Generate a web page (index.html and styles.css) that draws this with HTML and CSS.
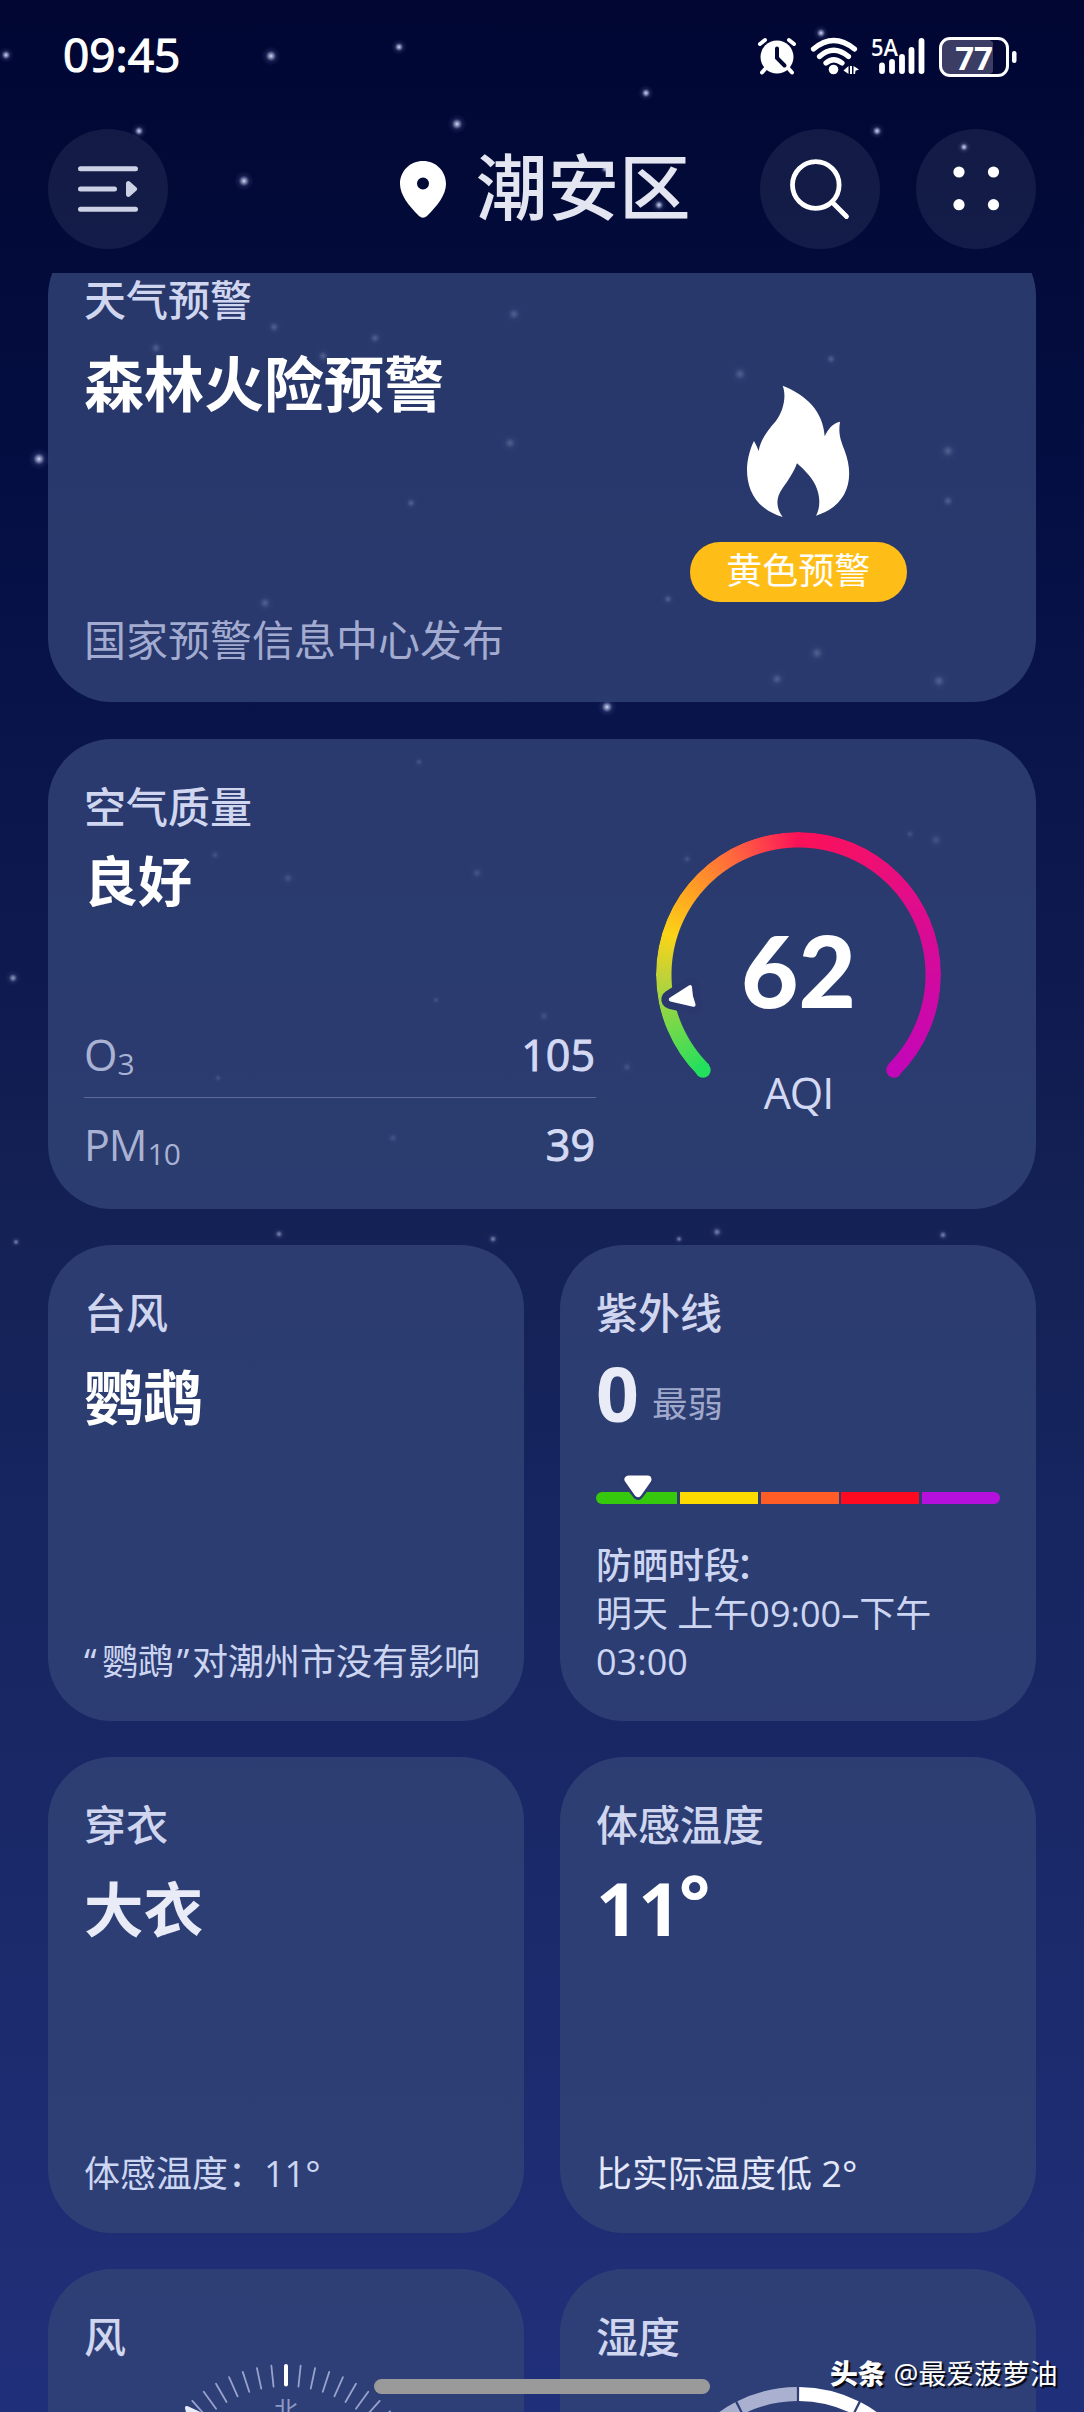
FILE: index.html
```html
<!DOCTYPE html>
<html lang="zh-CN">
<head>
<meta charset="utf-8">
<title>天气</title>
<link rel="stylesheet" href="styles.css">
</head>
<body>
<div class="screen">
  <svg class="stars" id="stars" viewBox="0 0 1084 2412" aria-hidden="true">
    <defs>
      <radialGradient id="glow">
        <stop offset="0" stop-color="#e4e8ff" stop-opacity=".95"/>
        <stop offset=".3" stop-color="#a9b0dc" stop-opacity=".6"/>
        <stop offset=".55" stop-color="#6670ac" stop-opacity=".18"/>
        <stop offset="1" stop-color="#4a5494" stop-opacity="0"/>
      </radialGradient>
    </defs>
  </svg>

  <div class="status">
    <span class="clock">09:45</span>
    <svg class="status-icons" width="262" height="60" viewBox="757 19 262 60" aria-hidden="true">
      <g fill="#fff" stroke="#fff" stroke-linecap="round">
        <circle cx="777" cy="57" r="16.500" stroke="none"/>
        <path d="M760 44l5-4M789 40l5 4M766 68l-4 4.500M788 68l4 4.500" fill="none" stroke-width="4"/>
        <path d="M777 48.500V58l7.500 7.500" fill="none" stroke="#020733" stroke-width="4"/>
      </g>
      <g fill="none" stroke="#fff" stroke-width="5.200" stroke-linecap="round">
        <path d="M813.500 49Q833.500 32 854.500 49M819.500 56.500Q833.500 44 848.500 56.500M826 63Q833.500 56.500 842 63"/>
        <circle cx="833.500" cy="69.500" r="4.800" fill="#fff" stroke="none"/>
      </g>
      <path d="M843.500 70.500l5-4.500v8zM850 66h2v8h-2zM853.500 66l5.500 3.500-3.500 1.200-.5 3.300h-1.500z" fill="#fff"/>
      <text class="net" x="871" y="56" textLength="27" lengthAdjust="spacingAndGlyphs">5A</text>
      <g stroke="#fff" stroke-width="5.800" stroke-linecap="round">
        <path d="M882 65.500V71M892 62V71M902 57V71M911.500 50V71M921.500 41V71"/>
      </g>
      <rect x="941" y="39" width="54" height="36" rx="9" fill="#3b3d64"/>
      <rect x="993" y="39" width="13" height="36" fill="#020733"/>
      <rect x="940.500" y="38.500" width="67" height="37" rx="9.500" fill="none" stroke="#fff" stroke-width="3"/>
      <rect x="1012" y="51" width="4.500" height="12" rx="2.200" fill="#fff"/>
      <text class="level" x="974" y="69.500" text-anchor="middle">77</text>
    </svg>
  </div>

  <header class="header">
    <button class="round" aria-label="城市列表">
      <svg width="120" height="120" viewBox="0 0 120 120"><g stroke="#cdd1e5" stroke-width="5" stroke-linecap="round"><path d="M32.500 39.800H87.500M32.500 60H66.500M32.500 80.200H87.500"/></g><path d="M78 54.500c0-2.500 2.500-3.200 4-1.800l6.500 5.800q1.600 1.500 0 3L82 67.300c-1.500 1.400-4 .7-4-1.800z" fill="#cdd1e5"/></svg>
    </button>
    <h1 class="city">
      <svg width="46" height="57" viewBox="0 0 46 57"><path fill="#fff" fill-rule="evenodd" d="M23 0C36 0 46 10 46 23c0 11-9 22-19 32q-4 3.500-8 0C9 45 0 34 0 23 0 10 10 0 23 0zm0 16.500a6 6 0 1 0 0 12 6 6 0 0 0 0-12z"/></svg>
      <span>潮安区</span>
    </h1>
    <button class="round" aria-label="搜索">
      <svg width="120" height="120" viewBox="0 0 120 120" fill="none" stroke="#fff" stroke-width="4.800" stroke-linecap="round"><circle cx="55.800" cy="56" r="23.300"/><path d="M72.500 73.500L86.500 87.500"/></svg>
    </button>
    <button class="round" aria-label="更多">
      <svg width="120" height="120" viewBox="0 0 120 120" fill="#fff"><circle cx="43" cy="43" r="5.600"/><circle cx="77.500" cy="43" r="5.600"/><circle cx="43" cy="75.700" r="5.600"/><circle cx="77.500" cy="75.700" r="5.600"/></svg>
    </button>
  </header>

  <main class="cards">
    <section class="card wide alert">
      <div class="col">
        <h2 class="title">天气预警</h2>
        <p class="headline">森林火险预警</p>
        <p class="source">国家预警信息中心发布</p>
      </div>
      <div class="alert-side">
        <svg width="105" height="133" viewBox="320 136 315 399"><path fill="#fff" d="M430 138C500 165 552 215 556 290C565 270 580 250 602 246C596 285 605 302 615 330C650 420 622 500 530 528C546 500 545 450 510 408Q490 385 473 371C465 395 445 425 430 445C408 475 410 505 430 532C350 508 323 450 323 390C323 360 333 325 344 304C350 315 355 325 358 334C362 305 385 270 408 246C435 212 441 165 430 138Z"/></svg>
        <span class="badge">黄色预警</span>
      </div>
    </section>

    <section class="card wide air">
      <div class="col">
        <h2 class="title">空气质量</h2>
        <p class="headline small">良好</p>
        <dl class="pollutants">
          <div class="row"><dt>O<span class="sub">3</span></dt><dd>105</dd></div>
          <div class="row"><dt>PM<span class="sub">10</span></dt><dd>39</dd></div>
        </dl>
      </div>
      <div class="gauge">
        <div class="ring"></div>
        <svg class="ring-marks" viewBox="0 0 285 285">
          <circle cx="47" cy="238" r="7.700" fill="#22df5d"/>
          <circle cx="238" cy="238" r="7.700" fill="#c406b9"/>
          <g stroke-linejoin="round"><path d="M14.800 167.500L34 155.200Q34.200 164.500 37.600 172.800z" fill="#2a386d" stroke="#2a386d" stroke-width="19"/>
          <path d="M14.800 167.500L34 155.200Q34.200 164.500 37.600 172.800z" fill="#fff" stroke="#fff" stroke-width="4"/></g>
        </svg>
        <span class="aqi">62</span>
        <span class="aqi-label">AQI</span>
      </div>
    </section>

    <section class="card">
      <h2 class="title">台风</h2>
      <p class="headline">鹦鹉</p>
      <p class="note"><span class="open">“</span>鹦鹉<span class="close">”</span>对潮州市没有影响</p>
    </section>

    <section class="card">
      <h2 class="title">紫外线</h2>
      <div class="uv"><span class="uv-value">0</span><span class="uv-level">最弱</span></div>
      <div class="scale">
        <i class="s1"></i><i class="s2"></i><i class="s3"></i><i class="s4"></i><i class="s5"></i>
        <svg class="scale-mark" width="38" height="36" viewBox="0 0 38 36"><path d="M7.500 8.500H30.500L19 23.500z" fill="#2c3a70" stroke="#2c3a70" stroke-width="11" stroke-linejoin="round"/><path d="M9.500 8.500H28.500L19 22z" fill="#fff" stroke="#fff" stroke-width="8" stroke-linejoin="round"/></svg>
      </div>
      <p class="note"><span class="strong">防晒时段<span class="colon">：</span></span><br>明天 上午09:00–下午<br>03:00</p>
    </section>

    <section class="card">
      <h2 class="title">穿衣</h2>
      <p class="headline soft">大衣</p>
      <p class="note">体感温度：11°</p>
    </section>

    <section class="card">
      <h2 class="title">体感温度</h2>
      <p class="temp">11<span class="deg">°</span></p>
      <p class="note bright">比实际温度低 2°</p>
    </section>

    <section class="card">
      <h2 class="title">风</h2>
      <svg class="dial" id="compass" width="404" height="300" viewBox="84 2364 404 300">
        <path d="M286 2366V2384.500" stroke="#fff" stroke-width="4" stroke-linecap="round"/>
        <path d="M187 2408L198 2413L190 2420z" fill="#e8ebfa" stroke="#e8ebfa" stroke-width="4" stroke-linejoin="round"/>
        <text class="north" x="286" y="2419" text-anchor="middle">北</text>
      </svg>
    </section>

    <section class="card">
      <h2 class="title">湿度</h2>
      <svg class="dial" id="humidity" width="404" height="300" viewBox="596 2364 404 300"></svg>
    </section>
  </main>

  <div class="home-bar"></div>
  <div class="credit"><b>头条</b><span>@最爱菠萝油</span></div>
</div>
<script src="script.js"></script>
</body>
</html>
```
FILE: styles.css
```css
* { box-sizing: border-box; }
body, h1, h2, p, dl, dd { margin: 0; }
body {
  font-family: "Open Sans", "Noto Sans CJK SC", sans-serif;
  color: #fff;
}
.screen {
  position: relative;
  width: 1084px;
  height: 2412px;
  overflow: hidden;
  display: flex;
  flex-direction: column;
  background: linear-gradient(180deg, #010633 0, #020a38 200px, #040e42 480px, #09144b 720px, #0e1a4f 960px, #142154 1215px, #16245f 1480px, #192765 1740px, #1c2b6d 2000px, #1f2e75 2260px, #202f7a 2412px);
}
.stars { position: absolute; left: 0; top: 0; width: 1084px; height: 2412px; }

.status {
  position: relative;
  height: 129px;
  padding: 26px 65px 0 63px;
  display: flex;
  justify-content: space-between;
  align-items: flex-start;
}
.clock { font-size: 46px; line-height: 57px; -webkit-text-stroke: 1.2px #fff; }
.status-icons { margin-top: -7px; }
.net { font: 600 24px "Open Sans", sans-serif; fill: #fff; }
.level { font: 700 33px "Open Sans", sans-serif; fill: #fff; }

.header {
  position: relative;
  height: 144px;
  padding: 0 48px;
  display: flex;
  align-items: flex-start;
  gap: 36px;
}
.round {
  width: 120px;
  height: 120px;
  padding: 0;
  border: 0;
  border-radius: 50%;
  background: rgba(235, 240, 255, .08);
  flex: none;
}
.round svg { display: block; }
.city {
  flex: 1;
  height: 120px;
  padding-left: 196px;
  display: flex;
  align-items: center;
  gap: 30px;
  font-size: 71.500px;
  line-height: 100px;
  font-weight: 500;
  color: #e3e5f0;
  white-space: nowrap;
}
.city span { margin-top: -5px; }

.cards {
  position: relative;
  height: 2139px;
  overflow: hidden;
  padding: 0 48px;
  display: grid;
  grid-template-columns: 476px 476px;
  grid-template-rows: 429px 471px;
  grid-auto-rows: 476px;
  gap: 36px;
  align-content: start;
}
.card {
  padding: 40px 36px 36px;
  border-radius: 64px;
  background: rgba(50, 67, 119, .8);
  display: flex;
  flex-direction: column;
}
.wide { grid-column: 1 / 3; flex-direction: row; }
.alert { margin-top: -41px; }
.air { padding-bottom: 17px; margin-top: 1px; }
.col { width: 512px; display: flex; flex-direction: column; }

.title { font-size: 42px; line-height: 56px; font-weight: 500; color: #d0d6ef; }
.headline { margin-top: 16px; font-size: 59.500px; line-height: 80px; font-weight: 700; }
.alert .headline { font-size: 60px; }
.headline.small { margin-top: 10px; font-size: 54px; line-height: 72px; }
.headline.soft { color: #e9ecf7; }
.source { margin-top: auto; font-size: 42px; line-height: 50px; padding-bottom: 1px; color: #a3acd0; }
.note { margin-top: auto; margin-bottom: -1px; font-size: 36px; line-height: 48px; color: #ccd5f1; white-space: nowrap; }
.note.bright { color: #e3e7f9; }
.strong { font-weight: 500; }
.colon { margin-left: -4px; }
.open { display: inline-block; width: 18px; }
.close { display: inline-block; width: 18px; text-align: center; }

.alert-side { width: 404px; display: flex; flex-direction: column; align-items: center; padding-top: 113px; margin-left: 1px; }
.badge {
  margin-top: 24px;
  width: 217px;
  height: 60px;
  border-radius: 30px;
  background: #ffbe17;
  font-size: 36px;
  line-height: 58px;
  text-align: center;
}

.pollutants { margin-top: auto; }
.row { display: flex; justify-content: space-between; height: 84px; line-height: 83px; font-size: 43px; }
.row + .row { height: 95px; line-height: 94px; border-top: 1px solid #5f6b9b; }
.row dt { color: #aab2d3; }
.row dd { color: #d3d9f3; padding-right: 1px; -webkit-text-stroke: 1px #d3d9f3; }
.row dt { letter-spacing: -1px; }
.sub { font-size: 30px; position: relative; top: 4px; margin-left: 1px; }

.gauge {
  position: relative;
  width: 285px;
  height: 285px;
  margin: 53px 0 0 60px;
  padding-top: 88px;
  display: flex;
  flex-direction: column;
  align-items: center;
}
.ring {
  position: absolute;
  inset: 0;
  border-radius: 50%;
  background: conic-gradient(from 225deg, #22df5d 0deg, #80d848 26deg, #c3d237 45deg, #fbd417 62deg, #ffa820 80deg, #ff8630 94deg, #ff5744 112deg, #fa1158 135deg, #f2106a 159deg, #e20d88 189deg, #d10a9f 225deg, #c406b9 270deg, transparent 270deg);
  -webkit-mask: radial-gradient(circle, transparent 126.500px, #000 127.500px);
  mask: radial-gradient(circle, transparent 126.500px, #000 127.500px);
}
.ring-marks { position: absolute; inset: 0; }
.aqi, .aqi-label { position: relative; }
.aqi { font: 900 99px/100px Lato, sans-serif; }
.aqi-label { margin-top: 48px; font-size: 43px; line-height: 50px; color: #d3d9f3; letter-spacing: -1px; }

.uv { margin-top: 12px; display: flex; align-items: flex-end; gap: 13px; }
.uv-value { font-size: 75px; line-height: 80px; font-weight: 700; color: #e9ecf7; }
.uv-level { font-size: 35.500px; line-height: 48px; margin-bottom: 6px; color: #a0a9cc; }
.scale { position: relative; margin-top: 59px; width: 404px; height: 12px; display: flex; justify-content: space-between; }
.scale i { width: 78px; height: 12px; }
.scale .s1 { width: 81px; background: #36c80c; border-radius: 6px 0 0 6px; }
.s2 { background: #fddb00; }
.s3 { background: #ff5c26; }
.s4 { background: #ff0a20; }
.s5 { background: #b611dc; border-radius: 0 6px 6px 0; }
.scale-mark { position: absolute; left: 22.500px; top: -21px; }

.temp { margin-top: 15px; font-size: 74px; line-height: 80px; font-weight: 700; }
.deg { position: relative; top: -7px; margin-left: -2px; }

.dial { display: block; margin-top: -1px; }
.north { font: 400 24px "Noto Sans CJK SC", sans-serif; fill: #8f99c5; }

.home-bar { position: absolute; left: 374px; top: 2379px; width: 336px; height: 15px; border-radius: 8px; background: #9a9a9a; }
.credit {
  position: absolute;
  left: 830px;
  top: 2355px;
  display: flex;
  gap: 8px;
  font-size: 27.800px;
  line-height: 36px;
  white-space: nowrap;
  text-shadow: 2px 2px 1px #05060c;
}
.credit b { font-weight: 900; }
```
FILE: script.js
```js
const NS = 'http://www.w3.org/2000/svg';
function add(parent, tag, attrs) {
  const el = document.createElementNS(NS, tag);
  for (const k in attrs) el.setAttribute(k, attrs[k]);
  parent.appendChild(el);
}

// Star positions: x, y, radius
const stars = [
  [6,55,8],[271,56,10],[399,47,8],[457,124,10],[139,131,8],[244,181,10],
  [821,33,8],[646,93,8],[877,131,8],[964,147,7],[605,169,6],[659,205,8],
  [39,459,11],[274,327,9],[375,338,9],[323,356,9],[156,348,9],[514,314,10],
  [510,443,10],[411,503,8],[265,603,10],[740,374,11],[831,359,8],[948,451,11],
  [948,501,9],[817,653,11],[777,679,10],[939,681,11],[668,599,8],[607,707,10],
  [419,762,7],[215,855,7],[288,878,9],[477,873,9],[436,1000,6],[544,1016,8],
  [13,978,8],[218,1078,6],[393,1138,8],[627,1067,8],[910,834,7],[936,840,10],
  [687,859,7],[16,1242,6],[279,1234,7],[493,1239,7],[679,1239,6],[717,1232,8],[943,1235,7]
];
const sky = document.getElementById('stars');
// Stars fade towards the horizon
stars.forEach(([cx, cy, r]) => add(sky, 'circle', {
  cx, cy, r, fill: 'url(#glow)', opacity: cy < 720 ? 1 : cy < 1200 ? 0.7 : 0.55
}));

// Compass ticks every six degrees, leaving out north
const compass = document.getElementById('compass');
for (let i = 1; i < 60; i++) {
  if (i > 52 || i < 9) add(compass, 'path', {
    d: 'M286 2365V2386', stroke: '#98a2cb', 'stroke-width': 1.8,
    'stroke-linecap': 'round', transform: `rotate(${i * 6} 286 2505)`
  });
}

// Humidity ring: ten segments across 270 degrees
const ring = document.getElementById('humidity');
const pt = (r, a) => `${798 + r * Math.sin(a * Math.PI / 180)} ${2523 - r * Math.cos(a * Math.PI / 180)}`;
for (let i = -5; i < 5; i++) {
  const a = i * 27 + 0.5, b = (i + 1) * 27 - 0.5;
  add(ring, 'path', {
    d: `M${pt(136, a)}A136 136 0 0 1 ${pt(136, b)}L${pt(122, b)}A122 122 0 0 0 ${pt(122, a)}Z`,
    fill: i < 0 ? '#aab1d0' : '#fff'
  });
}
```
